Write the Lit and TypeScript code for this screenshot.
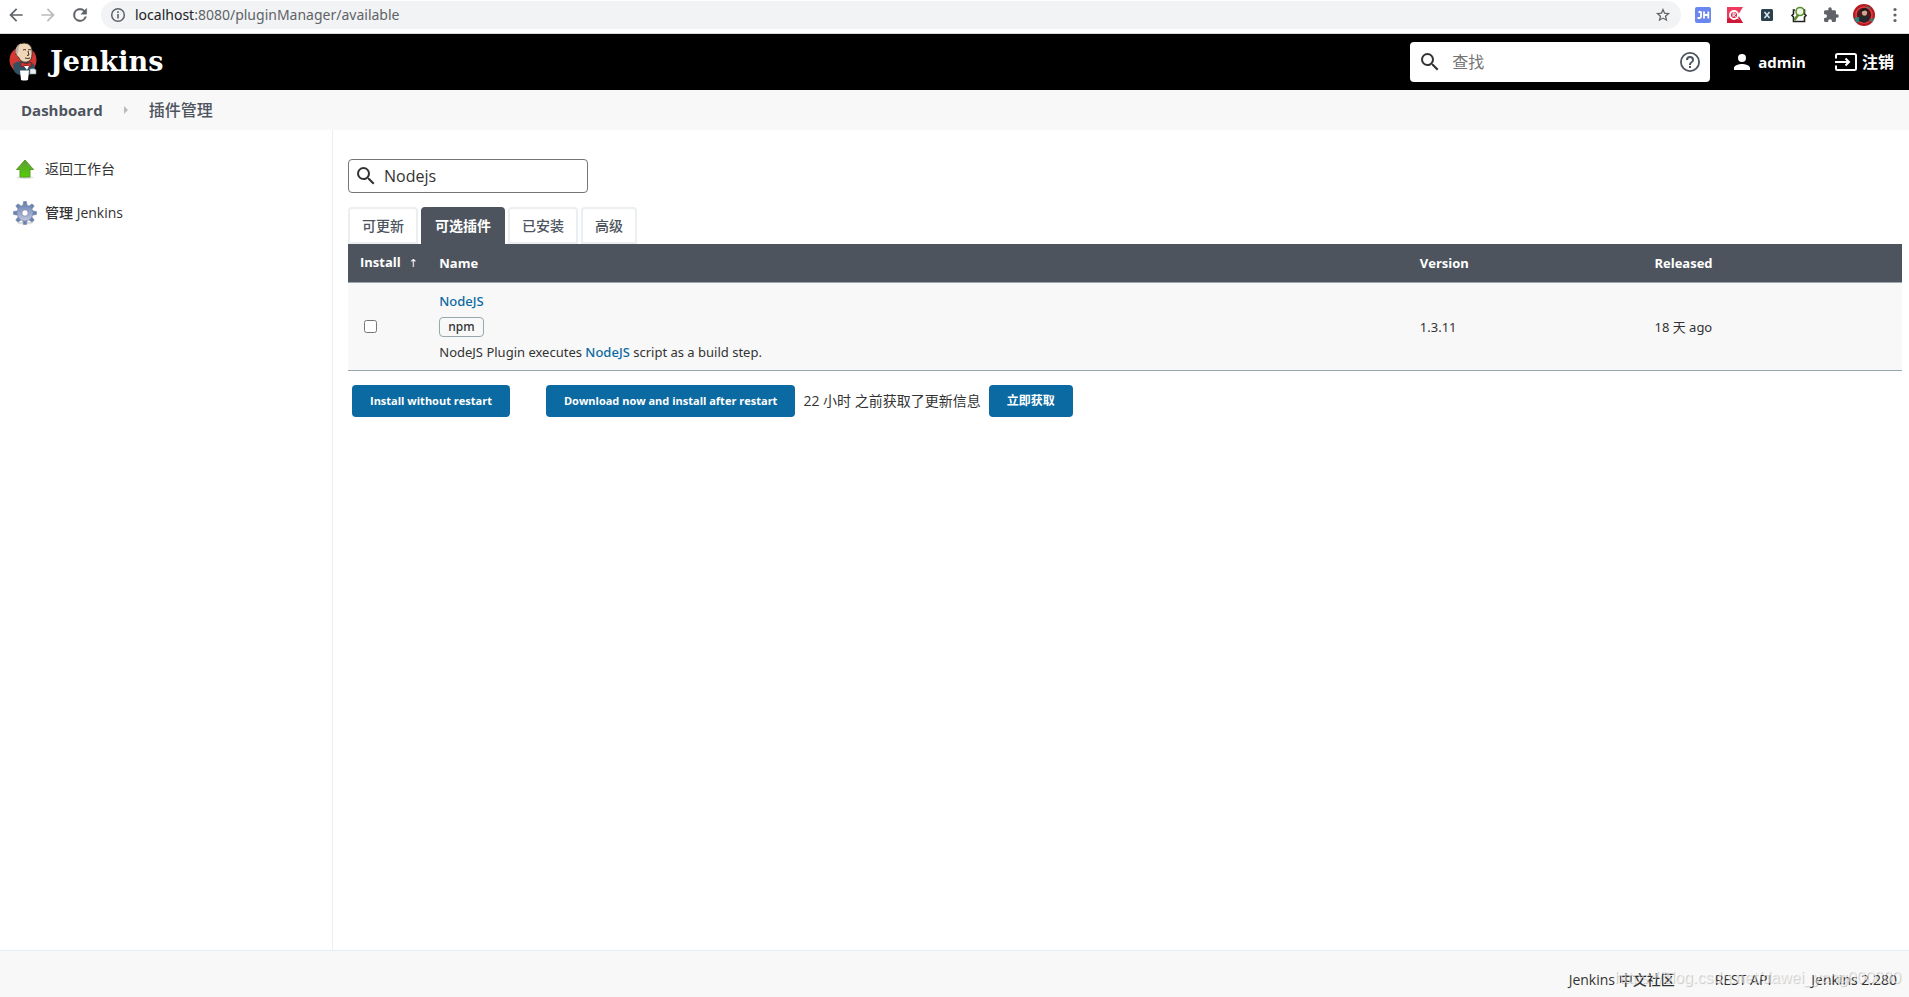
import { LitElement, html, css, svg } from "lit";
import { customElement, state } from "lit/decorators.js";

const magnifier = html`<svg class="mag" viewBox="0 0 24 24" aria-hidden="true"><path fill="#333" d="M15.5 14h-.79l-.28-.27A6.47 6.47 0 0 0 16 9.5 6.5 6.5 0 1 0 9.5 16c1.61 0 3.09-.59 4.23-1.57l.27.28v.79l5 4.99L20.49 19l-4.99-5zm-6 0C7.01 14 5 11.99 5 9.5S7.01 5 9.5 5 14 7.01 14 9.5 11.99 14 9.5 14z"/></svg>`;

const gearTeeth = Array.from({ length: 8 }, (_, i) => i * 45);

@customElement("browser-bar")
class BrowserBar extends LitElement {
  static styles = css`
    :host { display: flex; align-items: center; height: 34px; padding-bottom: 4px; box-sizing: border-box; background: #fff; border-bottom: 1px solid #d9dbdd; font: 14px/20px "Noto Sans", "Noto Sans CJK SC", sans-serif; }
    button { border: 0; padding: 0; background: none; display: flex; align-items: center; justify-content: center; width: 32px; height: 28px; flex: none; }
    svg { width: 20px; height: 20px; }
    .omni { flex: 1; display: flex; align-items: center; height: 28px; border-radius: 14px; background: #f1f3f4; margin: 0 6px 0 5px; }
    .info { width: 34px; }
    .url { flex: 1; color: #5f6368; }
    .host { color: #202124; }
    .star { margin-right: 2px; }
    .avatar { width: 34px; }
    .avatar svg { width: 22px; height: 22px; }
    .menu { width: 28px; }
  `;
  render() {
    return html`
      <button aria-label="Back"><svg viewBox="0 0 24 24"><path fill="#5f6368" d="M20 11H7.830l5.590-5.590L12 4l-8 8 8 8 1.410-1.410L7.830 13H20v-2z"/></svg></button>
      <button aria-label="Forward"><svg viewBox="0 0 24 24"><path fill="#b9bbbe" d="M12 4l-1.410 1.410L16.170 11H4v2h12.170l-5.580 5.590L12 20l8-8z"/></svg></button>
      <button aria-label="Reload"><svg viewBox="0 0 24 24"><path fill="#5f6368" stroke="#5f6368" stroke-width=".5" d="M17.650 6.350A7.960 7.960 0 0 0 12 4a8 8 0 1 0 7.730 10h-2.080A6 6 0 1 1 12 6c1.660 0 3.140.69 4.220 1.780L13 11h7V4l-2.350 2.350z"/></svg></button>
      <div class="omni">
        <button class="info" aria-label="Site information"><svg viewBox="0 0 20 20"><circle cx="10" cy="10" r="6.300" fill="none" stroke="#5f6368" stroke-width="1.500"/><path fill="#5f6368" d="M9.200 6.300h1.600v1.600H9.200zM9.200 9.100h1.600v4.400H9.200z"/></svg></button>
        <span class="url"><span class="host">localhost</span>:8080/pluginManager/available</span>
        <button class="star" aria-label="Bookmark"><svg viewBox="0 0 24 24"><path fill="#5f6368" d="M20.500 9.700l-6-.5L12 3.600 9.500 9.200l-6 .5 4.600 4-1.400 5.900 5.300-3.100 5.300 3.100-1.400-5.900zM12 14.900l-3 1.800.8-3.500L7.100 10.900l3.500-.3L12 7.400l1.400 3.200 3.500.3-2.700 2.300.8 3.500z"/></svg></button>
      </div>
      <button aria-label="JH extension"><svg viewBox="0 0 20 20"><rect x="2" y="2" width="16" height="16" rx="2" fill="#6a87f0"/><path d="M8 6.500v5q0 1.500-1.500 1.500H4.500M5.500 7H8M11 6.500v7M15.300 6.500v7M11 10h4.300" fill="none" stroke="#fff" stroke-width="1.800"/></svg></button>
      <button aria-label="R extension"><svg viewBox="0 0 20 20"><path d="M2 2h16l-5 8 5 8H2z" fill="#ee3a5c"/><path d="M2 14l11-4 5 8H2z" fill="#cf1738"/><circle cx="9" cy="10" r="4" fill="#d81e3f" stroke="#fff" stroke-width="2"/><path d="M8 12V8h1.300a1.100 1.100 0 0 1 0 2.200H8m1.300 0L10.500 12M12 12.500l2 2" stroke="#fff" fill="none"/></svg></button>
      <button aria-label="X extension"><svg viewBox="0 0 20 20"><rect x="4" y="4" width="12" height="12" rx="1.500" fill="#2b3f4f"/><path d="M7.500 7l5 6M12.500 7l-5 6" stroke="#dfe7ee" stroke-width="1.500"/></svg></button>
      <button aria-label="Search extension"><svg viewBox="0 0 20 20"><path d="M6 5H4.500v4L3 10.500 4.500 12v4.500H7M14 5h1.500v4l1.500 1.500-1.500 1.500v4.500H6" fill="none" stroke="#222" stroke-width="1.600"/><circle cx="11" cy="6.500" r="4" fill="#eef7e6" stroke="#5a8c2a" stroke-width="1.600"/><path d="M9 10l-3.500 5" stroke="#5a8c2a" stroke-width="2.400"/></svg></button>
      <button aria-label="Extensions"><svg viewBox="0 0 24 24"><path transform="translate(2 2) scale(.84)" fill="#5f6368" d="M20.500 11H19V7a2 2 0 0 0-2-2h-4V3.500a2.500 2.500 0 0 0-5 0V5H4a2 2 0 0 0-2 2v3.800h1.500a2.700 2.700 0 0 1 0 5.400H2V20a2 2 0 0 0 2 2h3.800v-1.500a2.700 2.700 0 0 1 5.400 0V22H17a2 2 0 0 0 2-2v-4h1.500a2.500 2.500 0 0 0 0-5z"/></svg></button>
      <button class="avatar" aria-label="Profile"><svg viewBox="0 0 22 22"><circle cx="11" cy="11" r="11" fill="#b01c22"/><circle cx="11" cy="11" r="8" fill="#4b1a1c" stroke="#ef3b3f" stroke-width="1.500"/><path d="M1 14l5-1 1 4-3 2zM17 15l4-1-2 5zM13 2l5 2-3 1z" fill="#23897f"/><path d="M6 17q0-6 5-6t5 6l-5 2z" fill="#26292b"/><ellipse cx="11.500" cy="8.500" rx="2.600" ry="3.200" fill="#d2a38e"/><path d="M8 8q0-4 4-3.500 3 0 2.500 3.500-1-2-3-1.500T8 8z" fill="#15181a"/></svg></button>
      <button class="menu" aria-label="Menu"><svg viewBox="0 0 20 20" fill="#5f6368"><circle cx="10" cy="4.500" r="1.600"/><circle cx="10" cy="10" r="1.600"/><circle cx="10" cy="15.500" r="1.600"/></svg></button>
    `;
  }
}

@customElement("page-header")
class PageHeader extends LitElement {
  static styles = css`
    :host { display: flex; align-items: center; height: 56px; padding: 0 15px 0 9px; background: #000; font: bold 16px/24px "Open Sans", "Noto Sans CJK SC", sans-serif; }
    a { color: #fff; text-decoration: none; display: flex; align-items: center; }
    .brand { gap: 13px; font: bold 27px/40px "DejaVu Serif", serif; }
    .butler { width: 28px; height: 40px; }
    .search { margin-left: auto; width: 300px; height: 40px; box-sizing: border-box; display: flex; align-items: center; gap: 10px; padding: 0 8px; background: #fff; border-radius: 4px; }
    .search input { flex: 1; min-width: 0; border: 0; outline: 0; padding: 0; font: 16px/24px "Open Sans", "Noto Sans CJK SC", sans-serif; background: none; color: #333; }
    .search input::placeholder { color: #757575; opacity: 1; }
    .mag, .help svg, .icon { width: 24px; height: 24px; display: block; }
    .user { margin: 0 28px 0 20px; gap: 4px; font-size: 15px; }
    .out { gap: 4px; }
  `;
  render() {
    return html`
      <a class="brand" href="#"><svg class="butler" viewBox="0 0 28 40">
        <ellipse cx="14" cy="18" rx="13.500" ry="13.500" fill="#d33833"/>
        <path d="M4 22q4-3 9-3l9 1q4 2 4 8-4 6-11 6-8-1-10-5z" fill="#335061"/>
        <path d="M6.500 9Q7 1.500 15 1q7 0 8 7 .5 8-2 10.500-3 2.500-6.500 1.500-4-1-5-5-3-1-3-6z" fill="#f0d6b7" stroke="#2b2020" stroke-width=".8"/>
        <path d="M6.500 8Q8 2.500 12 1.500q-3 3-2.500 6.500l-1 4-2-1z" fill="#b9aea0"/>
        <path d="M14 8q2-1 3 0M19 8q2-1 3 0M16 16q3 1 5 0M19 9l1 4-2 .5" fill="none" stroke="#3d2b25"/>
        <path d="M12 20l5 2 5-2v5l-5-1.500-5 1.500z" fill="#d33833" stroke="#7d1512" stroke-width=".6"/>
        <path d="M15 24h5l-2 4z" fill="#fff"/>
        <path d="M11 28.500h9l-1 9.500q-4 1-7 0z" fill="#fff"/><path d="M21 27q5-1 6 1v4h-6z" fill="#e9edf0" stroke="#81909b" stroke-width=".6"/>
      </svg>Jenkins</a>
      <label class="search">${magnifier}<input aria-label="查找" placeholder="查找" />
        <a class="help" href="#" aria-label="Help"><svg viewBox="0 0 24 24"><path fill="#4d545d" d="M11 16h2v2h-2zM12 2a10 10 0 1 0 0 20 10 10 0 0 0 0-20zm0 18.200A8.200 8.200 0 1 1 12 3.800a8.200 8.200 0 0 1 0 16.400zM12 6a4 4 0 0 0-4 4h2a2 2 0 1 1 4 0c0 2-3 1.750-3 5h2c0-2.250 3-2.500 3-5a4 4 0 0 0-4-4z"/></svg></a>
      </label>
      <a class="user" href="#"><svg class="icon" viewBox="0 0 24 24"><path fill="#fff" d="M12 12a4 4 0 1 0 0-8 4 4 0 0 0 0 8zm0 2c-2.670 0-8 1.340-8 4v2h16v-2c0-2.660-5.330-4-8-4z"/></svg>admin</a>
      <a class="out" href="#"><svg class="icon" viewBox="0 0 24 24"><path d="M2 8.500V5.500q0-1.500 1.500-1.500h17Q22 4 22 5.500v13q0 1.500-1.500 1.500h-17Q2 20 2 18.500v-3M1 12h13M11.500 8.500 15 12l-3.500 3.500" fill="none" stroke="#fff" stroke-width="2"/></svg>注销</a>
    `;
  }
}

@customElement("side-panel")
class SidePanel extends LitElement {
  static styles = css`
    :host { display: block; width: 332px; flex: none; border-right: 1px solid #ebeef1; padding-top: 17px; font: 14px/20px "Open Sans", "Noto Sans CJK SC", sans-serif; }
    a { display: flex; align-items: center; gap: 8px; height: 44px; padding-left: 13px; color: #333; text-decoration: none; }
    .active { font-weight: 500; }
    svg { width: 24px; height: 24px; }
  `;
  render() {
    return html`
      <a href="#"><svg viewBox="0 0 24 24"><defs><linearGradient id="g" x2="0" y2="1"><stop stop-color="#5f9a3a"/><stop offset="1" stop-color="#4fd006"/></linearGradient></defs><ellipse cx="12" cy="20.500" rx="8.500" ry="1.500" fill="#ddd"/><path d="M12 3l8.500 9.500H17V20H7v-7.500H3.500z" fill="url(#g)" stroke="#5a9a22"/></svg>返回工作台</a>
      <a class="active" href="#"><svg viewBox="0 0 24 24"><defs><linearGradient id="b" gradientUnits="userSpaceOnUse" x1="12" y1="1" x2="12" y2="23"><stop stop-color="#5f7fb2"/><stop offset="1" stop-color="#d3cfe6"/></linearGradient></defs><ellipse cx="12" cy="22" rx="8" ry="1.500" fill="#ddd"/><g fill="url(#b)" stroke="#8089a5" stroke-width=".6">${gearTeeth.map((a) => svg`<path transform="rotate(${a} 12 12)" d="M9.800 5 10.500.5h3l.7 4.500z"/>`)}<circle cx="12" cy="12" r="8"/></g><circle cx="12" cy="12" r="3.200" fill="#fff" stroke="#8089a5" stroke-width=".8"/></svg>管理 Jenkins</a>
    `;
  }
}

@customElement("plugin-manager")
class PluginManager extends LitElement {
  @state() private tab = 1;
  static styles = css`
    :host { display: block; flex: 1; min-width: 0; padding: 29px 7px 0 15px; color: #333; font: 14px/20px "Open Sans", "Noto Sans CJK SC", sans-serif; }
    a { color: #0b6aa2; text-decoration: none; font-weight: 500; }
    .filter { display: flex; align-items: center; gap: 6px; width: 240px; height: 34px; box-sizing: border-box; border: 1px solid #767676; border-radius: 4px; padding: 0 5px; }
    .filter input { flex: 1; min-width: 0; border: 0; outline: 0; padding: 0; font: 16px/24px "Open Sans", sans-serif; color: #333; background: none; }
    .mag { width: 24px; height: 24px; }
    .tabs { display: flex; gap: 3px; margin-top: 14px; height: 37px; }
    .tab { border: 2px solid #ebeff2; border-radius: 4px 4px 0 0; background: #fff; color: #4d545d; padding: 0 12px; font: 500 14px/20px "Open Sans", "Noto Sans CJK SC", sans-serif; }
    .tab.on { background: #4d545d; border-color: #4d545d; color: #fff; font-weight: bold; }
    table { width: 100%; border-collapse: collapse; table-layout: fixed; }
    th { background: #4d545d; color: #fff; text-align: left; height: 38px; padding: 1px 12px 0; font-weight: bold; font-size: 13px; box-sizing: border-box; border-bottom: 1px solid #98a6ad; }
    td { padding: 6px 12px 5px; background: #f8f8f8; border-bottom: 1px solid #98a6ad; font-family: "Noto Sans", "Noto Sans CJK SC", sans-serif; font-size: 13px; }
    th:first-child { width: 5.1%; }
    th:nth-child(2) { width: 63.1%; }
    th:nth-child(3) { width: 15.1%; }
    .arrow { margin-left: 8px; font-weight: 500; font-size: 11px; font-family: "DejaVu Sans", sans-serif; }
    .name, .desc { line-height: 25px; }
    .tag { display: block; width: max-content; border: 1px solid #98a6ad; border-radius: 4px; padding: 0 8px; color: #333; font-size: 12px; line-height: 18px; margin: 3px 0; }
    .check { display: block; width: 13px; height: 13px; margin: 0 0 0 4px; }
    .actions { display: flex; align-items: center; margin: 14px 4px 0; }
    .go { height: 32px; border: 0; border-radius: 4px; background: #0b6aa2; color: #fff; padding: 0 18px; font: bold 11px/20px "Open Sans", "Noto Sans CJK SC", sans-serif; }
    .second { margin-left: 36px; }
    .fetch { font-size: 12px; }
    .when { margin: 0 8px; }
  `;
  render() {
    return html`
      <label class="filter">${magnifier}<input aria-label="Filter" .value=${"Nodejs"} /></label>
      <div class="tabs">
        ${["可更新", "可选插件", "已安装", "高级"].map((t, i) => html`<button class="tab ${i === this.tab ? "on" : ""}" @click=${() => (this.tab = i)}>${t}</button>`)}
      </div>
      <table>
        <thead><tr><th>Install<span class="arrow">↑</span></th><th>Name</th><th>Version</th><th>Released</th></tr></thead>
        <tbody><tr>
          <td><input class="check" type="checkbox" aria-label="Install NodeJS" /></td>
          <td><div class="name"><a href="#">NodeJS</a></div><a class="tag" href="#">npm</a><div class="desc">NodeJS Plugin executes <a href="#">NodeJS</a> script as a build step.</div></td>
          <td>1.3.11</td><td>18 天 ago</td>
        </tr></tbody>
      </table>
      <div class="actions">
        <button class="go">Install without restart</button>
        <button class="go second">Download now and install after restart</button>
        <span class="when">22 小时 之前获取了更新信息</span>
        <button class="go fetch">立即获取</button>
      </div>
    `;
  }
}

@customElement("app-root")
class AppRoot extends LitElement {
  static styles = css`
    :host { display: flex; flex-direction: column; min-height: 100vh; background: #fff; color: #333; font: 14px/20px "Open Sans", "Noto Sans CJK SC", sans-serif; }
    a { text-decoration: none; }
    .crumbs { display: flex; align-items: center; height: 40px; padding: 0 21px; background: #f8f8f8; font-size: 16px; gap: 19px; }
    .crumbs a { color: #4d545d; font-weight: 500; }
    .crumbs .home { font-weight: bold; font-size: 15px; }
    .sep { width: 8px; height: 10px; }
    .body { flex: 1; display: flex; }
    footer { position: relative; display: flex; justify-content: flex-end; gap: 40px; height: 47px; box-sizing: border-box; padding: 19px 12px 0; background: #f8f8f8; border-top: 1px solid #e3edf3; }
    footer a { color: #333; font-weight: 500; }
    .mark { position: absolute; right: 8px; bottom: 9px; font: 16px/20px "Liberation Sans", sans-serif; color: rgba(255, 255, 255, 0.6); text-shadow: 1px 1px 1px rgba(0, 0, 0, 0.2); pointer-events: none; }
  `;
  render() {
    return html`
      <browser-bar></browser-bar>
      <page-header></page-header>
      <nav class="crumbs"><a class="home" href="#">Dashboard</a><svg class="sep" viewBox="0 0 8 10"><path d="M2 1l4 4-4 4z" fill="#b8bcc0"/></svg><a href="#">插件管理</a></nav>
      <div class="body"><side-panel></side-panel><plugin-manager></plugin-manager></div>
      <footer><a href="#">Jenkins 中文社区</a><a href="#">REST API</a><a href="#">Jenkins 2.280</a><span class="mark">https://blog.csdn.net/dawei_yang000000</span></footer>
    `;
  }
}
